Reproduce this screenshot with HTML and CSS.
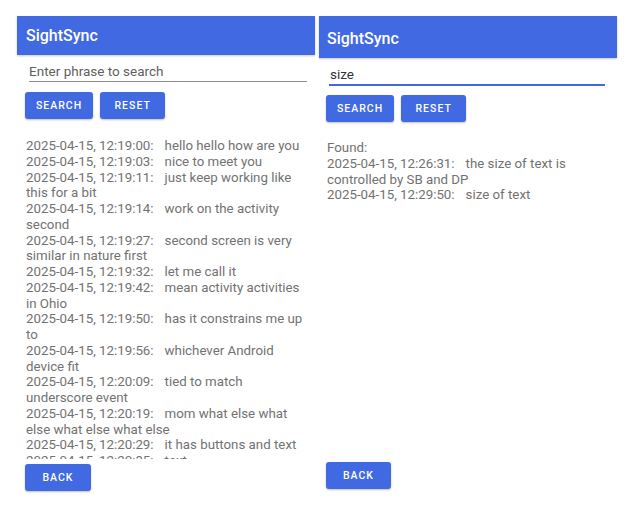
FILE: index.html
```html
<!DOCTYPE html>
<html>
<head>
<meta charset="utf-8">
<link rel="stylesheet" href="styles.css">
</head>
<body>
<div class="screens">
  <section class="panel panel-left">
    <header class="appbar">SightSync</header>
    <div class="field"><input class="field-input" type="text" placeholder="Enter phrase to search"></div>
    <div class="actions">
      <button class="btn btn-search">SEARCH</button>
      <button class="btn btn-reset">RESET</button>
    </div>
    <div class="log">
      <p><span class="ts">2025-04-15, 12:19:00:</span>hello hello how are you</p>
      <p><span class="ts">2025-04-15, 12:19:03:</span>nice to meet you</p>
      <p><span class="ts">2025-04-15, 12:19:11:</span>just keep working like this for a bit</p>
      <p><span class="ts">2025-04-15, 12:19:14:</span>work on the activity second</p>
      <p><span class="ts">2025-04-15, 12:19:27:</span>second screen is very similar in nature first</p>
      <p><span class="ts">2025-04-15, 12:19:32:</span>let me call it</p>
      <p><span class="ts">2025-04-15, 12:19:42:</span>mean activity activities in Ohio</p>
      <p><span class="ts">2025-04-15, 12:19:50:</span>has it constrains me up to</p>
      <p><span class="ts">2025-04-15, 12:19:56:</span>whichever Android device fit</p>
      <p><span class="ts">2025-04-15, 12:20:09:</span>tied to match underscore event</p>
      <p><span class="ts">2025-04-15, 12:20:19:</span>mom what else what else what else what else</p>
      <p><span class="ts">2025-04-15, 12:20:29:</span>it has buttons and text</p>
      <p><span class="ts">2025-04-15, 12:20:35:</span>text</p>
    </div>
    <div class="footer"><button class="btn btn-back">BACK</button></div>
  </section>
  <section class="panel panel-right">
    <header class="appbar appbar-tall">SightSync</header>
    <div class="field field-focused"><input class="field-input field-input-filled" type="text" value="size"></div>
    <div class="actions">
      <button class="btn btn-search">SEARCH</button>
      <button class="btn btn-reset">RESET</button>
    </div>
    <div class="log log-results">
      <p>Found:</p>
      <p><span class="ts">2025-04-15, 12:26:31:</span>the size of text is controlled by SB and DP</p>
      <p><span class="ts">2025-04-15, 12:29:50:</span>size of text</p>
    </div>
    <div class="footer"><button class="btn btn-back">BACK</button></div>
  </section>
</div>
</body>
</html>
```
FILE: styles.css
```css
* { box-sizing: border-box; }
html, body {
  margin: 0;
  padding: 0;
  background: #ffffff;
}
body {
  font-family: Roboto, "Noto Sans", "Liberation Sans", sans-serif;
  width: 627px;
  height: 525px;
  overflow: hidden;
}
.screens {
  display: flex;
  gap: 4px;
  padding: 16px 0 0 17px;
}
.panel {
  width: 298px;
  display: flex;
  flex-direction: column;
}
.appbar {
  height: 39px;
  background: #4169e1;
  color: #ffffff;
  font-size: 16px;
  font-weight: 500;
  display: flex;
  align-items: center;
  padding-left: 9px;
  padding-bottom: 1px;
  box-shadow: 0 1px 2px rgba(0, 0, 0, 0.22);
}
.appbar-tall {
  height: 42px;
  padding-left: 8px;
  padding-bottom: 0;
  padding-top: 2px;
}
.field {
  margin: 6px 8px 0 12px;
  border-bottom: 1px solid #8c8c8c;
  height: 21px;
}
.field-focused {
  margin: 6px 12px 0 10px;
  border-bottom: 2px solid #4169e1;
  height: 22px;
}
.field-input {
  display: block;
  width: 100%;
  height: 20px;
  border: 0;
  outline: none;
  padding: 0;
  margin: 0;
  background: transparent;
  font-family: Roboto, "Noto Sans", "Liberation Sans", sans-serif;
  font-size: 13.5px;
  color: #333333;
}
.field-input::placeholder {
  color: #5f5f5f;
  opacity: 1;
}
.field-input-filled {
  padding-left: 1px;
}
.actions {
  display: flex;
  gap: 7px;
  margin: 10px 0 0 8px;
}
.panel-right .actions {
  margin: 9px 0 0 7px;
}
.btn {
  height: 27px;
  border: 0;
  border-radius: 3px;
  background: #4169e1;
  color: #ffffff;
  font-family: Roboto, "Noto Sans", "Liberation Sans", sans-serif;
  font-size: 10.5px;
  font-weight: 500;
  letter-spacing: 1px;
  padding: 0 11px;
  box-shadow: 0 1px 2px rgba(0, 0, 0, 0.25);
  cursor: pointer;
}
.btn-search { min-width: 68px; }
.btn-reset { min-width: 65px; }
.btn-back { min-width: 66px; }
.panel-right .btn-back { min-width: 65px; }
.log {
  margin: 19px 9px 0 9px;
  height: 321px;
  overflow: hidden;
  font-size: 13.3px;
  line-height: 15.75px;
  color: #727272;
}
.log-results {
  margin: 18px 9px 0 8px;
  height: 317px;
}
.log p {
  margin: 0;
}
.ts {
  padding-right: 11px;
}
.footer {
  margin: 5px 0 0 8px;
}
.panel-right .footer {
  margin-left: 7px;
}
```
